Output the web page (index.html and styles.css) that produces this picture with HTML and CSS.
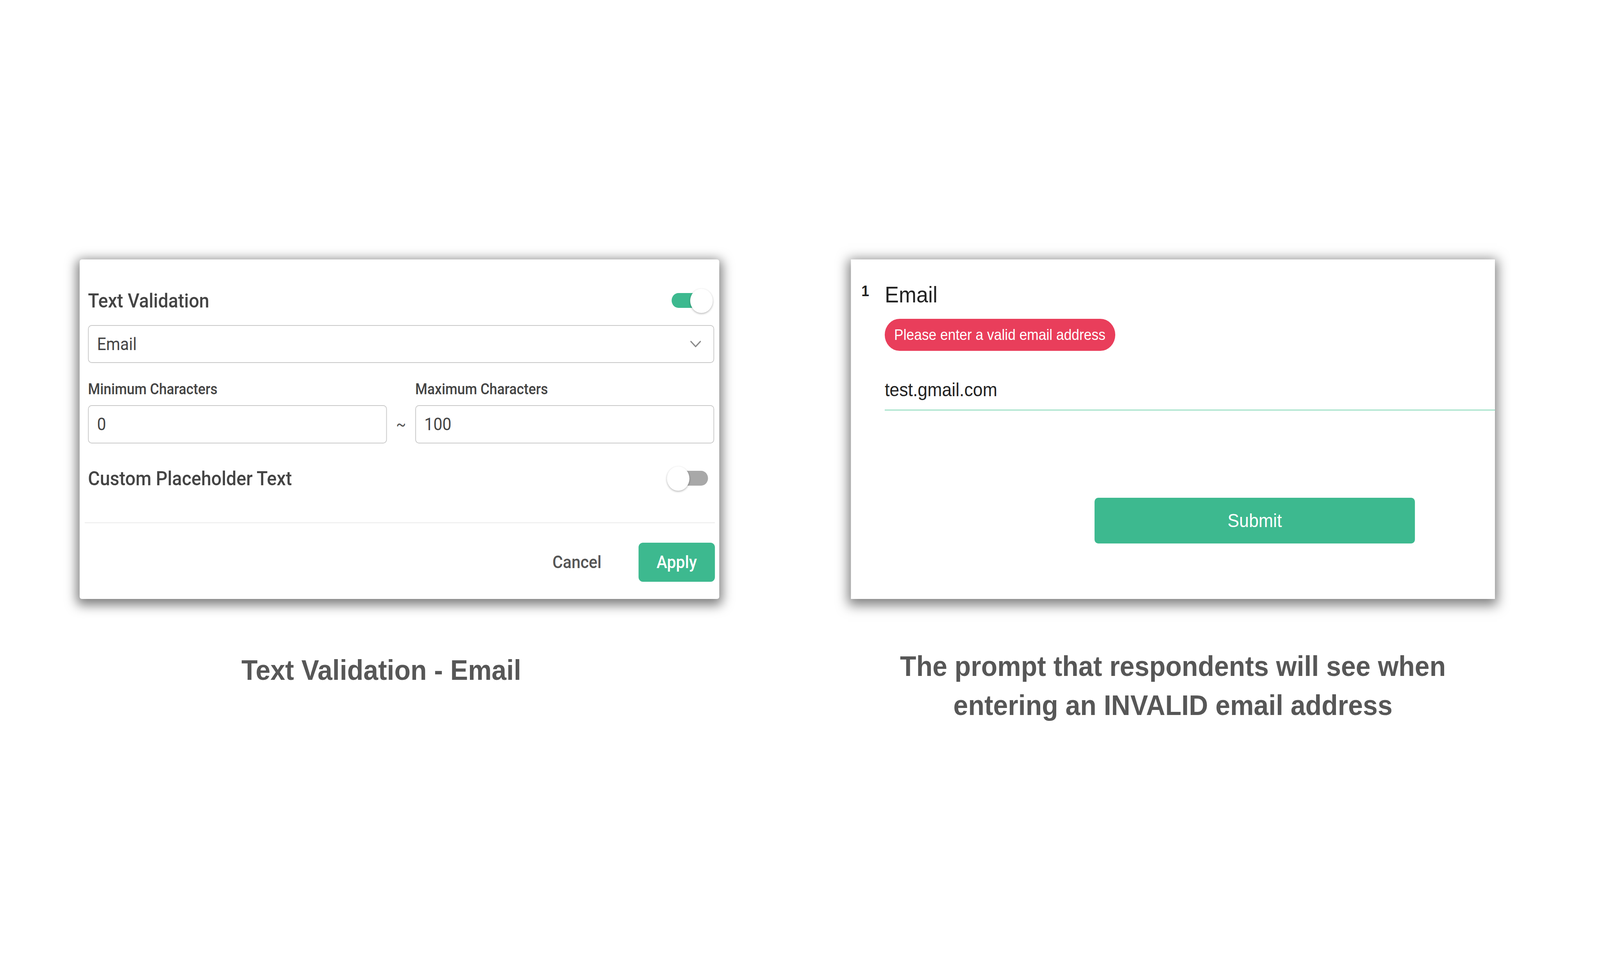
FILE: index.html
```html
<!DOCTYPE html>
<html lang="en">
<head>
<meta charset="utf-8">
<title>Text Validation - Email</title>
<link rel="stylesheet" href="styles.css">
</head>
<body>
<main class="stage">
  <section class="panel">
    <div class="card settings">
      <div class="row head">
        <h2 class="title">Text Validation</h2>
        <span class="switch on"><span class="track"></span><span class="knob"></span></span>
      </div>
      <div class="select">
        <span>Email</span>
        <svg class="chev" width="30" height="18" viewBox="0 0 30 18"><polyline points="2,2 15,15 28,2" fill="none" stroke="#8a8a8a" stroke-width="3.2" stroke-linecap="round" stroke-linejoin="round"/></svg>
      </div>
      <div class="range">
        <span class="lbl">Minimum Characters</span>
        <span></span>
        <span class="lbl">Maximum Characters</span>
        <div class="field">0</div>
        <span class="tilde">~</span>
        <div class="field">100</div>
      </div>
      <div class="row place">
        <h2 class="title">Custom Placeholder Text</h2>
        <span class="switch"><span class="track"></span><span class="knob"></span></span>
      </div>
      <div class="divider"></div>
      <div class="actions">
        <button class="cancel">Cancel</button>
        <button class="apply">Apply</button>
      </div>
    </div>
    <p class="caption cap-left">Text Validation - Email</p>
  </section>
  <section class="panel">
    <div class="card preview">
      <div class="question">
        <span class="qnum">1</span>
        <div class="qbody">
          <h3 class="qtitle">Email</h3>
          <span class="error">Please enter a valid email address</span>
          <div class="answer">test.gmail.com</div>
          <button class="submit">Submit</button>
        </div>
      </div>
    </div>
    <p class="caption cap-right">The prompt that respondents will see when<br>entering an INVALID email address</p>
  </section>
</main>
</body>
</html>
```

FILE: styles.css
```css
* { box-sizing: border-box; }
html, body { margin: 0; padding: 0; background: #ffffff; }
body {
  overflow: hidden;
  font-family: "Liberation Sans", Arial, sans-serif;
}

/* The design is laid out on a 4400px-wide canvas */
.stage {
  width: max-content;
  display: grid;
  grid-template-columns: 1759px 1771px;
  column-gap: 362px;
  padding: 664px 0 0 219px;
  align-items: start;
  transform-origin: 0 0;
}
/* the browser caps the window at 4096px: fit the 4400px canvas across it */
@media (min-width: 4000px) and (max-width: 4399px) {
  .stage { transform: scaleX(0.930909); }
}

.panel { display: flex; flex-direction: column; }

.card {
  background: #ffffff;
  height: 869px;
  box-shadow: 0 8px 30px 8px rgba(0, 0, 0, 0.5);
}

/* ---------- Settings card ---------- */
.settings {
  border-radius: 6px;
  padding: 75px 14px 0 23px;
  display: flex;
  flex-direction: column;
  font-family: Roboto, "Noto Sans", sans-serif;
}

.row {
  display: flex;
  align-items: center;
  justify-content: space-between;
  height: 62px;
}
.row.place { margin-top: 58px; height: 63px; }

.title {
  margin: 0;
  font-size: 50px;
  font-weight: 500;
  color: #444444;
  line-height: 1;
}

.switch {
  position: relative;
  width: 126px;
  height: 62px;
  margin-right: 4px;
  flex: none;
}
.track {
  position: absolute;
  left: 13px;
  top: 11px;
  width: 100px;
  height: 38px;
  border-radius: 19px;
  background: #a8a8a8;
}
.switch.on .track { background: #3db98f; }
.knob {
  position: absolute;
  top: 0;
  left: 0;
  width: 62px;
  height: 62px;
  border-radius: 50%;
  background: #ffffff;
  box-shadow: 0 2px 5px rgba(0, 0, 0, 0.3);
}
.switch.on .knob { left: auto; right: 0; }

.select {
  margin-top: 31px;
  height: 97px;
  border: 2px solid #c8c8c8;
  border-radius: 10px;
  display: flex;
  align-items: center;
  justify-content: space-between;
  padding: 0 34px 0 23px;
  font-size: 44px;
  color: #444444;
}
.chev { display: block; }

.range {
  margin-top: 45px;
  display: grid;
  grid-template-columns: 1fr 78px 1fr;
  grid-template-rows: 44px 98px;
  row-gap: 19px;
}
.lbl {
  font-size: 38px;
  font-weight: 500;
  line-height: 44px;
  color: #444444;
}
.field {
  border: 2px solid #c8c8c8;
  border-radius: 10px;
  display: flex;
  align-items: center;
  padding-left: 23px;
  font-size: 44px;
  color: #444444;
}
.tilde {
  display: flex;
  align-items: center;
  justify-content: center;
  font-size: 40px;
  color: #555555;
}

.divider {
  margin: 81px -2px 0 -9px;
  height: 2px;
  background: #ebebeb;
}

.actions {
  margin-top: 50px;
  height: 100px;
  display: flex;
  justify-content: flex-end;
  align-items: center;
  gap: 102px;
}
.cancel {
  border: 0;
  background: none;
  padding: 0;
  font-family: inherit;
  font-size: 44px;
  font-weight: 500;
  color: #555555;
}
.apply {
  width: 210px;
  height: 100px;
  border: 0;
  border-radius: 12px;
  background: #3db98f;
  color: #ffffff;
  font-family: inherit;
  font-size: 44px;
  font-weight: 500;
  margin-right: -2px;
}

/* ---------- Preview card ---------- */
.preview {
  padding: 55px 0 0 29px;
  font-family: "Liberation Sans", Arial, sans-serif;
}
.question { display: flex; align-items: flex-start; }
.qnum {
  width: 64px;
  flex: none;
  padding-top: 7px;
  font-size: 38px;
  font-weight: 700;
  line-height: 1;
  color: #222222;
}
.qbody {
  flex: 1;
  display: flex;
  flex-direction: column;
  align-items: flex-start;
}
.qtitle {
  margin: 0;
  font-size: 58px;
  font-weight: 400;
  line-height: 69px;
  color: #222222;
}
.error {
  margin-top: 28px;
  height: 82px;
  padding: 0 27px 0 26px;
  border-radius: 41px;
  background: #e93e5b;
  color: #ffffff;
  font-size: 38px;
  display: flex;
  align-items: center;
}
.answer {
  margin-top: 73px;
  align-self: stretch;
  font-size: 48px;
  line-height: 53px;
  color: #222222;
  padding-bottom: 24px;
  border-bottom: 3px solid #a6e3cb;
}
.submit {
  margin-top: 223px;
  margin-left: 577px;
  width: 881px;
  height: 117px;
  border: 0;
  border-radius: 10px;
  background: #3db98f;
  color: #ffffff;
  font-family: inherit;
  font-size: 48px;
}

/* ---------- Captions ---------- */
.caption {
  margin: 0;
  font-family: "Liberation Sans", Arial, sans-serif;
  font-weight: 700;
  font-size: 73px;
  line-height: 100px;
  color: #575757;
  text-align: center;
}
.cap-left { margin-top: 132px; padding-right: 100px; }
.cap-right { margin-top: 122px; }
```
